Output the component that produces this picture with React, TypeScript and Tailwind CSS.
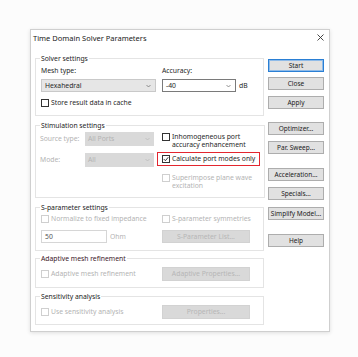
import React from "react";

const Check = ({ checked = false, disabled = false }: { checked?: boolean; disabled?: boolean }) => (
  <span
    className={`w-[8px] h-[8px] shrink-0 border bg-white flex items-center justify-center ${
      disabled ? "border-[#cfcfcf]" : "border-[#333333]"
    }`}
  >
    {checked && (
      <svg width="6" height="6" viewBox="0 0 6 6">
        <path d="M0.8 3.1 L2.4 4.7 L5.3 1.2" fill="none" stroke="#222" strokeWidth="0.9" />
      </svg>
    )}
  </span>
);

const Chevron = ({ color = "#666" }: { color?: string }) => (
  <svg width="5" height="4" viewBox="0 0 5 4" className="shrink-0">
    <path d="M0.5 1 L2.5 3 L4.5 1" fill="none" stroke={color} strokeWidth="0.7" />
  </svg>
);

const SideButton = ({ label, mt, primary = false }: { label: string; mt: string; primary?: boolean }) => (
  <div
    className={`${mt} h-[13px] w-[56px] flex items-center justify-center whitespace-nowrap text-[6.5px] bg-[#e1e1e1] text-[#222] border ${
      primary ? "border-[#2a7fd4] shadow-[inset_0_0_0_1px_#8fbbe8]" : "border-[#adadad]"
    }`}
  >
    {label}
  </div>
);

const GrayButton = ({ label, h = "h-[14px]" }: { label: string; h?: string }) => (
  <div className={`${h} w-[88px] flex items-center justify-center whitespace-nowrap bg-[#d9d9d9] border border-[#d2d2d2] text-[#b6b6b6]`}>
    {label}
  </div>
);

export default function App() {
  return (
    <div className="w-[358px] h-[357px] bg-[#fcfcfc] pt-[29px] pl-[30px] font-['Noto_Sans',sans-serif] text-[6.8px] leading-[8px] text-[#262626]">
      <div className="w-[300px] h-[303px] bg-white border border-[#cfcfcf] shadow-[0_1px_4px_rgba(0,0,0,0.12)] flex flex-col">
        {/* title bar */}
        <div className="h-[14px] flex items-center justify-between pl-[2px] pr-[5px] pt-[1px]">
          <span className="text-[7.5px] leading-[10px] text-[#1a1a1a]">Time Domain Solver Parameters</span>
          <svg width="7" height="7" viewBox="0 0 7 7">
            <path d="M0.5 0.5 L6.5 6.5 M6.5 0.5 L0.5 6.5" stroke="#333" strokeWidth="0.9" />
          </svg>
        </div>

        <div className="flex pl-[4px]">
          {/* groups */}
          <div className="w-[229px] mt-[10px] flex flex-col">
            <fieldset className="h-[62px] border border-[#e4e4e4] px-[4px]">
              <legend className="px-[1px] leading-[9px] text-[#222]">Solver settings</legend>
              <div className="flex mt-[3px] h-[9px] items-center">
                <span className="w-[122px] pl-[1px]">Mesh type:</span>
                <span>Accuracy:</span>
              </div>
              <div className="flex mt-[4px] h-[13px]">
                <div className="ml-[1px] w-[115px] h-[13px] bg-[#e6e6e6] border border-[#c9c9c9] flex items-center justify-between pl-[3px] pr-[4px]">
                  <span>Hexahedral</span>
                  <Chevron />
                </div>
                <div className="ml-[6px] w-[74px] h-[13px] bg-white border border-[#7a7a7a] flex items-center justify-between pl-[3px] pr-[4px]">
                  <span>-40</span>
                  <Chevron />
                </div>
                <span className="ml-[3px] self-center">dB</span>
              </div>
              <div className="flex items-center mt-[6px] h-[9px] pl-[1px] gap-[2px]">
                <Check />
                <span>Store result data in cache</span>
              </div>
            </fieldset>

            <fieldset className="mt-[5px] h-[77px] border border-[#e4e4e4] px-[4px]">
              <legend className="px-[1px] leading-[9px] text-[#222]">Stimulation settings</legend>
              <div className="flex">
                <div className="w-[117px] flex flex-col">
                  <div className="flex items-center mt-[2px] h-[14px]">
                    <span className="w-[45px] text-[#b3b3b3]">Source type:</span>
                    <div className="w-[69px] h-[14px] bg-[#d9d9d9] flex items-center justify-between pl-[3px] pr-[4px] text-[#b3b3b3]">
                      <span>All Ports</span>
                      <Chevron color="#b8b8b8" />
                    </div>
                  </div>
                  <div className="flex items-center mt-[7px] h-[14px]">
                    <span className="w-[45px] text-[#b3b3b3]">Mode:</span>
                    <div className="w-[69px] h-[14px] bg-[#d9d9d9] flex items-center justify-between pl-[3px] pr-[4px] text-[#b3b3b3]">
                      <span>All</span>
                      <Chevron color="#b8b8b8" />
                    </div>
                  </div>
                </div>
                <div className="flex-1 flex flex-col">
                  <div className="flex mt-[3px] pl-[5px] gap-[2px]">
                    <Check />
                    <span>
                      Inhomogeneous port
                      <br />
                      accuracy enhancement
                    </span>
                  </div>
                  <div className="mt-[3px] w-[103px] h-[14px] border border-[#e3262f] flex items-center pl-[4px] gap-[2px]">
                    <Check checked />
                    <span className="whitespace-nowrap">Calculate port modes only</span>
                  </div>
                  <div className="flex mt-[8px] pl-[5px] gap-[2px] text-[#b3b3b3]">
                    <Check disabled />
                    <span>
                      Superimpose plane wave
                      <br />
                      excitation
                    </span>
                  </div>
                </div>
              </div>
            </fieldset>

            <fieldset className="mt-[5px] h-[48px] border border-[#e4e4e4] px-[4px]">
              <legend className="px-[1px] leading-[9px] text-[#222]">S-parameter settings</legend>
              <div className="flex mt-[3px] h-[8px] items-center">
                <div className="w-[122px] flex items-center pl-[1px] gap-[2px] text-[#b3b3b3]">
                  <Check disabled />
                  <span>Normalize to fixed impedance</span>
                </div>
                <div className="flex items-center gap-[2px] text-[#b3b3b3]">
                  <Check disabled />
                  <span>S-parameter symmetries</span>
                </div>
              </div>
              <div className="flex mt-[7px] h-[13px] items-center">
                <div className="w-[122px] flex items-center">
                  <div className="ml-[1px] w-[66px] h-[13px] bg-white border border-[#d6d6d6] flex items-center pl-[3px] text-[#555]">
                    50
                  </div>
                  <span className="ml-[3px] text-[#b3b3b3]">Ohm</span>
                </div>
                <GrayButton label="S-Parameter List..." h="h-[13px]" />
              </div>
            </fieldset>

            <fieldset className="mt-[3px] h-[34px] border border-[#e4e4e4] px-[4px]">
              <legend className="px-[1px] leading-[9px] text-[#3a1526]">Adaptive mesh refinement</legend>
              <div className="flex mt-[4px] h-[14px] items-center">
                <div className="w-[122px] flex items-center pl-[1px] gap-[2px] text-[#b3b3b3]">
                  <Check disabled />
                  <span>Adaptive mesh refinement</span>
                </div>
                <GrayButton label="Adaptive Properties..." />
              </div>
            </fieldset>

            <fieldset className="mt-[4px] h-[33px] border border-[#e4e4e4] px-[4px]">
              <legend className="px-[1px] leading-[9px] text-[#222]">Sensitivity analysis</legend>
              <div className="flex mt-[4px] h-[14px] items-center">
                <div className="w-[122px] flex items-center pl-[1px] gap-[2px] text-[#b3b3b3]">
                  <Check disabled />
                  <span>Use sensitivity analysis</span>
                </div>
                <GrayButton label="Properties..." />
              </div>
            </fieldset>
          </div>

          {/* side buttons */}
          <div className="ml-[4px] mt-[15px] flex flex-col">
            <SideButton label="Start" mt="mt-0" primary />
            <SideButton label="Close" mt="mt-[5px]" />
            <SideButton label="Apply" mt="mt-[6px]" />
            <SideButton label="Optimizer..." mt="mt-[13px]" />
            <SideButton label="Par. Sweep..." mt="mt-[6px]" />
            <SideButton label="Acceleration..." mt="mt-[14px]" />
            <SideButton label="Specials..." mt="mt-[6px]" />
            <SideButton label="Simplify Model..." mt="mt-[7px]" />
            <SideButton label="Help" mt="mt-[14px]" />
          </div>
        </div>
      </div>
    </div>
  );
}
